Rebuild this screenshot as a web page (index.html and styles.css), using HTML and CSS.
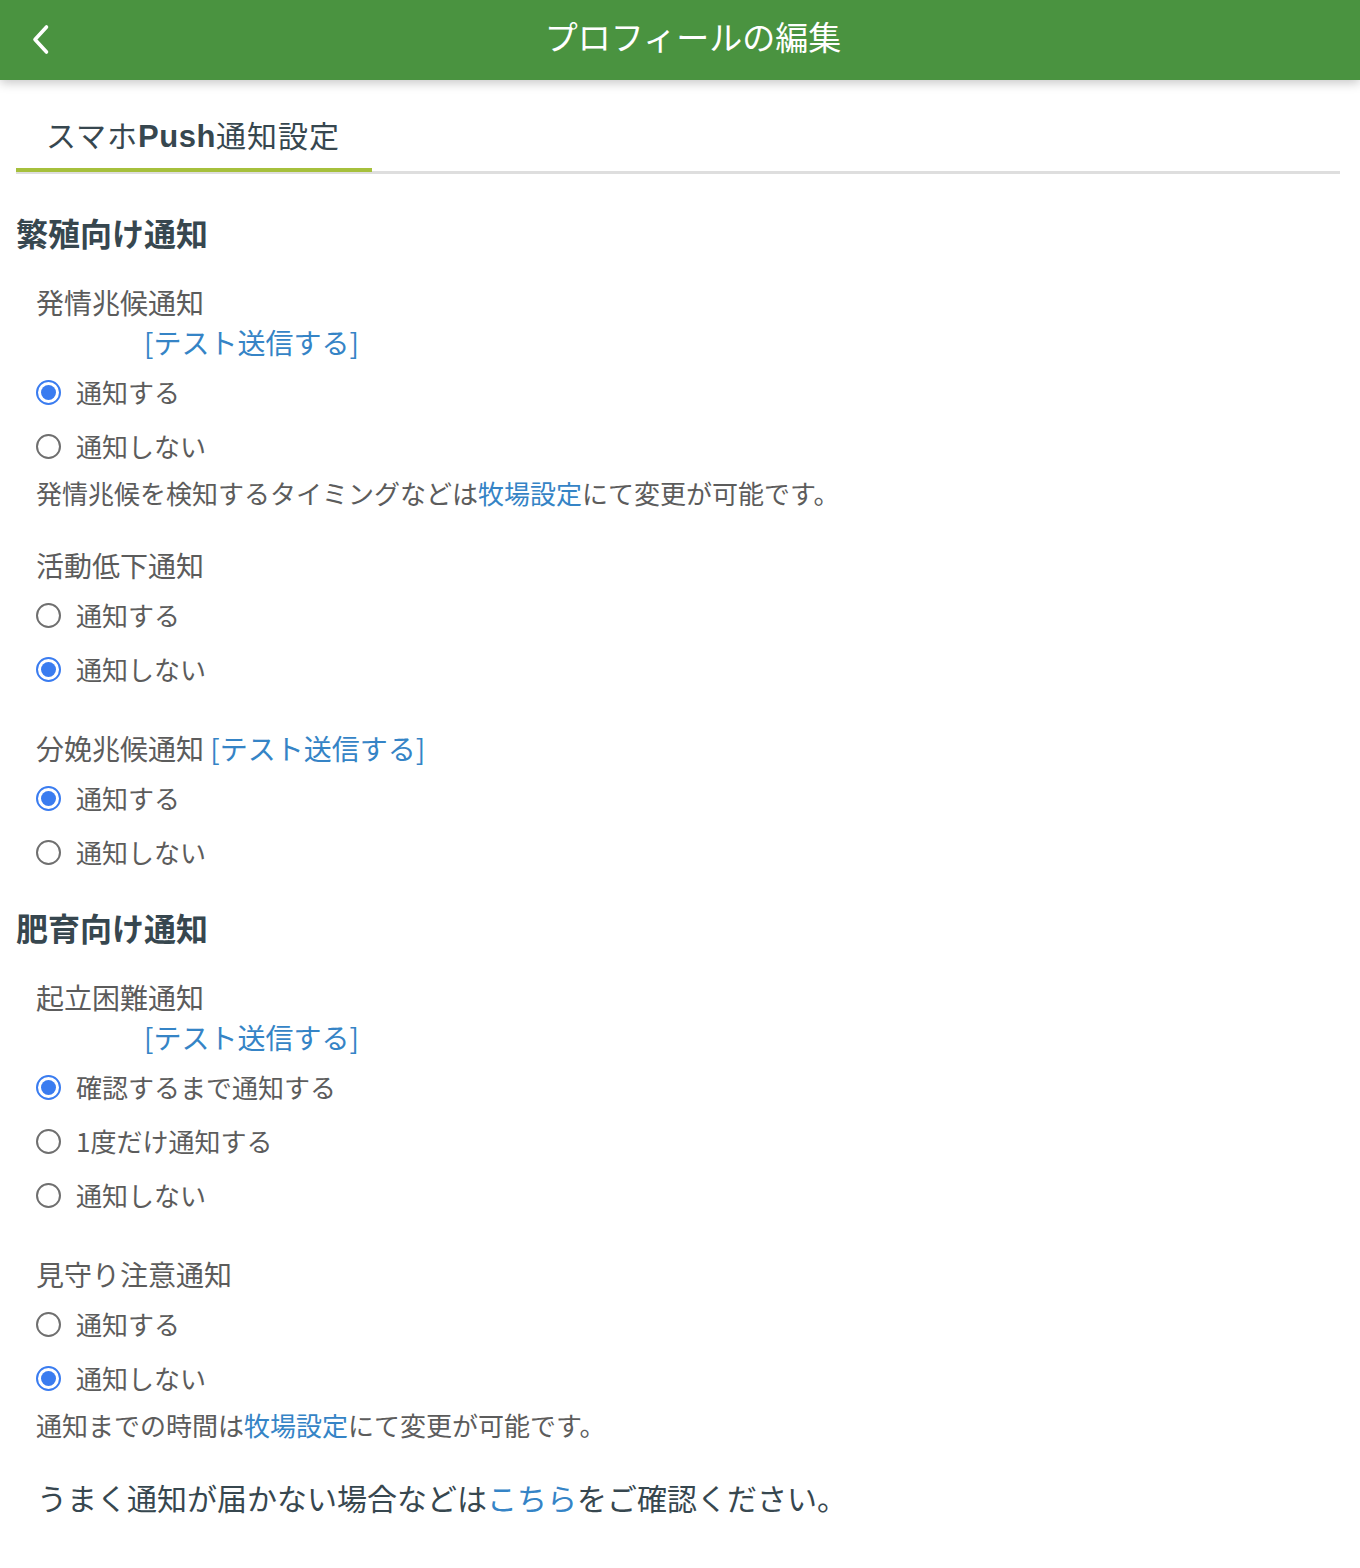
FILE: index.html
```html
<!DOCTYPE html>
<html lang="ja">
<head>
<meta charset="utf-8">
<title>プロフィールの編集</title>
<link rel="stylesheet" href="styles.css">
</head>
<body>
<header class="appbar">
  <a class="back" href="#" aria-label="戻る">
    <svg width="28" height="36" viewBox="0 0 28 36"><polyline points="15.5,5 4,17.5 15.5,30" fill="none" stroke="#fff" stroke-width="3.6" stroke-linecap="round" stroke-linejoin="round"/></svg>
  </a>
  <h1 class="appbar-title">プロフィールの編集</h1>
</header>

<main class="page">
  <nav class="tabs">
    <span class="tab active">スマホ<span class="tab-latin">Push</span>通知設定</span>
  </nav>

  <section class="section">
    <h2 class="section-title">繁殖向け通知</h2>

    <div class="item">
      <div class="item-label">発情兆候通知</div>
      <div class="item-link-line"><a class="link" href="#">[テスト送信する]</a></div>
      <div class="radios">
        <label class="radio"><span class="dot checked"></span><span class="radio-text">通知する</span></label>
        <label class="radio"><span class="dot"></span><span class="radio-text">通知しない</span></label>
      </div>
      <p class="note">発情兆候を検知するタイミングなどは<a class="link" href="#">牧場設定</a>にて変更が可能です。</p>
    </div>

    <div class="item">
      <div class="item-label">活動低下通知</div>
      <div class="radios">
        <label class="radio"><span class="dot"></span><span class="radio-text">通知する</span></label>
        <label class="radio"><span class="dot checked"></span><span class="radio-text">通知しない</span></label>
      </div>
    </div>

    <div class="item">
      <div class="item-label">分娩兆候通知 <a class="link" href="#">[テスト送信する]</a></div>
      <div class="radios">
        <label class="radio"><span class="dot checked"></span><span class="radio-text">通知する</span></label>
        <label class="radio"><span class="dot"></span><span class="radio-text">通知しない</span></label>
      </div>
    </div>
  </section>

  <section class="section">
    <h2 class="section-title">肥育向け通知</h2>

    <div class="item">
      <div class="item-label">起立困難通知</div>
      <div class="item-link-line"><a class="link" href="#">[テスト送信する]</a></div>
      <div class="radios">
        <label class="radio"><span class="dot checked"></span><span class="radio-text">確認するまで通知する</span></label>
        <label class="radio"><span class="dot"></span><span class="radio-text">1度だけ通知する</span></label>
        <label class="radio"><span class="dot"></span><span class="radio-text">通知しない</span></label>
      </div>
    </div>

    <div class="item">
      <div class="item-label">見守り注意通知</div>
      <div class="radios">
        <label class="radio"><span class="dot"></span><span class="radio-text">通知する</span></label>
        <label class="radio"><span class="dot checked"></span><span class="radio-text">通知しない</span></label>
      </div>
      <p class="note">通知までの時間は<a class="link" href="#">牧場設定</a>にて変更が可能です。</p>
    </div>
  </section>

  <p class="footer-text">うまく通知が届かない場合などは<a class="link" href="#">こちら</a>をご確認ください。</p>
</main>
</body>
</html>
```

FILE: styles.css
```css
* { box-sizing: border-box; }

html, body {
  margin: 0;
  padding: 0;
  background: #fff;
}

body {
  font-family: "Noto Sans CJK JP", "Noto Sans", sans-serif;
  color: #37474f;
}

.appbar {
  position: relative;
  z-index: 2;
  height: 80px;
  background: #4a9340;
  box-shadow: 0 3px 10px rgba(0, 0, 0, 0.22);
  display: flex;
  align-items: center;
  justify-content: center;
}

.back {
  position: absolute;
  left: 31px;
  top: 22px;
  display: block;
  width: 28px;
  height: 36px;
}

.appbar-title {
  margin: 0 0 8px 26px;
  font-size: 33px;
  font-weight: 400;
  color: #fff;
  line-height: 1;
}

.page {
  padding: 0 20px 40px 16px;
}

.tabs {
  margin-top: 23px;
  border-bottom: 3px solid #dedede;
  display: flex;
}

.tab {
  position: relative;
  margin-bottom: -1px;
  padding: 0 32px 0 30px;
  font-size: 30px;
  line-height: 62px;
  color: #37474f;
  border-bottom: 4px solid #a6c03c;
  letter-spacing: 1px;
}

.tab-latin {
  font-family: "Liberation Sans", "Noto Sans", sans-serif;
  font-weight: 700;
  font-size: 31px;
  letter-spacing: 0.5px;
}

.section-title {
  margin: 0;
  font-size: 32px;
  font-weight: 700;
  line-height: 48px;
  color: #37474f;
}

.section {
  margin-top: 24px;
}

.section:first-of-type {
  margin-top: 34px;
}

.section-title + .item {
  margin-top: 26px;
}

.item {
  padding-left: 20px;
  margin-top: 32px;
}

.item-label {
  font-size: 28px;
  line-height: 40px;
  color: #5c5c5c;
}

.item-link-line {
  padding-left: 108px;
  font-size: 28px;
  line-height: 40px;
}

.link {
  color: #3584c6;
  text-decoration: none;
}

.radios {
  margin-top: 3px;
  display: flex;
  flex-direction: column;
}

.radio {
  height: 54px;
  display: flex;
  align-items: center;
  gap: 15px;
}

.dot {
  width: 25px;
  height: 25px;
  border-radius: 50%;
  border: 2px solid #6f6f6f;
  flex: none;
  display: flex;
  align-items: center;
  justify-content: center;
}

.dot.checked {
  border-color: #3a7cf0;
}

.dot.checked::after {
  content: "";
  width: 15px;
  height: 15px;
  border-radius: 50%;
  background: #3a7cf0;
}

.radio-text {
  font-size: 26px;
  color: #5c5c5c;
  line-height: 1;
}

.note {
  margin: 0;
  font-size: 26px;
  line-height: 40px;
  color: #5c5c5c;
}

.footer-text {
  margin: 30px 0 0 21px;
  font-size: 30px;
  line-height: 44px;
  color: #37474f;
}
```
